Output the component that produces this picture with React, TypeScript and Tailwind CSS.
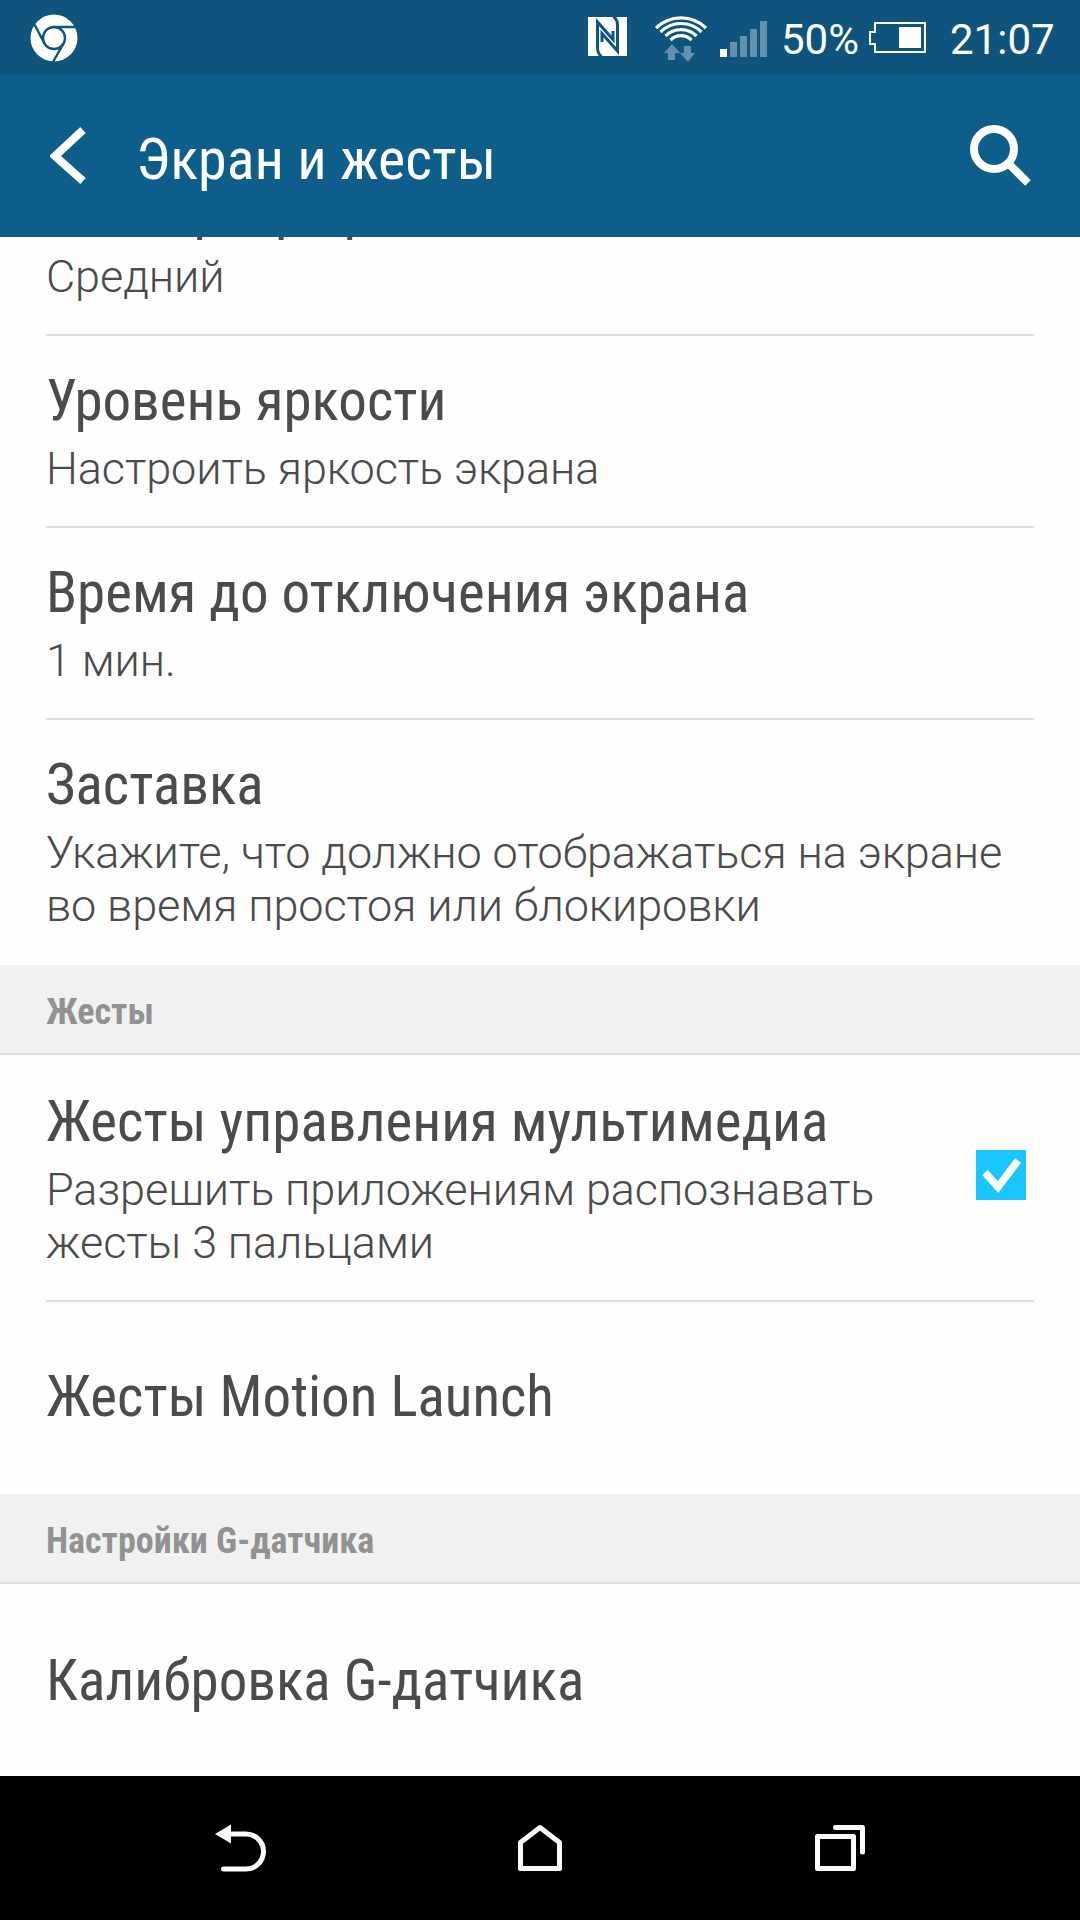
import type { ReactNode } from "react";

const titleClass =
  "block h-[68px] w-fit whitespace-nowrap leading-[68px] [font-stretch:75%]";

interface RowProps {
  title: string;
  summary?: string[];
  divider?: boolean;
  className?: string;
  children?: ReactNode;
}

function Row({ title, summary, divider, className = "", children }: RowProps) {
  return (
    <div className={`shrink-0 px-[46px] ${className}`}>
      <div
        className={`flex h-full items-start justify-between ${
          summary ? "pt-[31px]" : "pt-[63px]"
        } ${divider ? "border-b-2 border-[#dddddd]" : ""}`}
      >
        <div>
          <span className={`${titleClass} text-[57px]`}>{title}</span>
          {summary && (
            <p className="mt-[7px] text-[45px] leading-[53px] font-light tracking-[-0.1px] whitespace-nowrap">
              {summary.map((line) => (
                <span key={line} className="block">
                  {line}
                </span>
              ))}
            </p>
          )}
        </div>
        {children}
      </div>
    </div>
  );
}

function SectionHeader({ label }: { label: string }) {
  return (
    <div className="flex h-[90px] shrink-0 items-center border-b-2 border-[#dcdedd] bg-[#f0f2f1] px-[46px] pt-[6px]">
      <span className="text-[36px] leading-[42px] font-bold text-[#929292] [font-stretch:75%]">
        {label}
      </span>
    </div>
  );
}

function StatusBar() {
  return (
    <div className="flex h-[75px] items-center bg-[#0e547c] text-[42px] text-white">
      <svg width="48" height="48" viewBox="0 0 48 48" className="ml-[30px]">
        <circle cx="24" cy="24" r="23.5" fill="#fff" />
        <g fill="none" stroke="#0e547c" strokeWidth="2.4">
          <circle cx="24" cy="24" r="11" />
          <path d="M24 13H46M14.5 29.5L4.5 10.5M33.5 29.5L23 48" />
        </g>
      </svg>
      <svg width="39" height="39" viewBox="0 0 39 39" className="mb-[2px] ml-[510px]">
        <path d="M0 0H39V39H0Z" fill="#fff" />
        <path
          d="M13.5 39.5Q9.5 36.500 9.500 31V5L25 22.500V14M25.500 -0.500Q29.500 2.500 29.500 8V34L14 16.500V25"
          fill="none"
          stroke="#0e547c"
          strokeWidth="3"
        />
      </svg>
      <svg width="54" height="52" viewBox="0 0 54 52" className="ml-[27px]">
        <g fill="none" stroke="#fff" strokeWidth="3.200">
          <path d="M2 16A36 36 0 0 1 52 16" />
          <path d="M6.500 20A29 29 0 0 1 47.500 20" />
          <path d="M11.500 24A22 22 0 0 1 42.500 24" />
          <path d="M16.500 28A15 15 0 0 1 37.500 28" />
        </g>
        <path
          d="M18 32L26 41H21V48H14V41H10ZM30 34H37V41H41L34 50L26 41H30Z"
          fill="#6291ad"
        />
      </svg>
      <svg width="47" height="36" viewBox="0 0 47 36" className="mt-[3px] ml-[12px]">
        <path d="M0 28H7V36H0Z" fill="#fff" />
        <path
          d="M10 21H17V36H10ZM20 15H27V36H20ZM30 8H37V36H30ZM40 0H47V36H40Z"
          fill="#6291ad"
        />
      </svg>
      <span className="mt-[3px] ml-[14px] w-[79px]">50%</span>
      <svg width="57" height="31" viewBox="0 0 57 31" className="ml-[9px]">
        <path d="M6 1H56V30H6V22H1V10H6Z" fill="none" stroke="#fff" strokeWidth="2" />
        <path d="M30 5H52V26H30Z" fill="#fff" />
      </svg>
      <span className="mt-[3px] ml-[24px]">21:07</span>
    </div>
  );
}

function ActionBar() {
  return (
    <div className="flex h-[162px] items-center bg-[#0d5e8b] text-white">
      <svg width="38" height="58" viewBox="0 0 38 58" className="ml-[50px]">
        <path d="M33 3L5 29L33 54" fill="none" stroke="#fff" strokeWidth="8" />
      </svg>
      <span className="ml-[48px] grow pt-[6px]">
        <span className={`${titleClass} text-[58px]`}>Экран и жесты</span>
      </span>
      <svg width="64" height="64" viewBox="0 0 64 64" className="mt-[2px] mr-[46px]">
        <circle cx="24" cy="24" r="20" fill="none" stroke="#fff" strokeWidth="8" />
        <path d="M38 38L58 58" stroke="#fff" strokeWidth="8" />
      </svg>
    </div>
  );
}

function Checkbox() {
  return (
    <svg width="50" height="50" viewBox="0 0 50 50" className="mt-[62px] mr-2">
      <path d="M0 0H50V50H0Z" fill="#1bc5ff" />
      <path d="M9 22.500L22 37L42 10.500" fill="none" stroke="#fff" strokeWidth="7.500" />
    </svg>
  );
}

function NavBar() {
  return (
    <div className="flex h-[144px] shrink-0 items-center bg-black">
      <svg width="51" height="48" viewBox="0 0 51 48" className="ml-[215px]">
        <path d="M0 10L16 0.500V19.500Z" fill="#fff" />
        <path
          d="M14 10H31A17.500 17.500 0 0 1 31 45H8.500"
          fill="none"
          stroke="#fff"
          strokeWidth="5"
          strokeLinecap="round"
        />
      </svg>
      <svg width="44" height="48" viewBox="0 0 44 48" className="ml-[252px]">
        <path
          d="M2.500 18.500L22 3.500L41.500 18.500V44.500H2.500Z"
          fill="none"
          stroke="#fff"
          strokeWidth="5"
          strokeLinejoin="round"
        />
      </svg>
      <svg width="51" height="48" viewBox="0 0 51 48" className="ml-[253px]">
        <g
          fill="none"
          stroke="#fff"
          strokeWidth="5"
          strokeLinejoin="round"
          strokeLinecap="round"
        >
          <path d="M2.500 12.500H38.500V44.500H2.500Z" />
          <path d="M20.500 3.500H47.500V28" />
        </g>
      </svg>
    </div>
  );
}

export default function App() {
  return (
    <div className="flex h-[1920px] w-[1080px] flex-col overflow-hidden bg-[#fefefe] font-['Roboto',sans-serif] text-[#4b4b4b]">
      <StatusBar />
      <ActionBar />
      <div className="flex grow flex-col overflow-hidden">
        {/* first row is scrolled half under the action bar */}
        <Row
          title="Размер шрифта"
          summary={["Средний"]}
          divider
          className="-mt-[93px] h-[192px]"
        />
        <Row
          title="Уровень яркости"
          summary={["Настроить яркость экрана"]}
          divider
          className="h-[192px]"
        />
        <Row
          title="Время до отключения экрана"
          summary={["1 мин."]}
          divider
          className="h-[192px]"
        />
        <Row
          title="Заставка"
          summary={[
            "Укажите, что должно отображаться на экране",
            "во время простоя или блокировки",
          ]}
          className="h-[245px]"
        />
        <SectionHeader label="Жесты" />
        <Row
          title="Жесты управления мультимедиа"
          summary={["Разрешить приложениям распознавать", "жесты 3 пальцами"]}
          divider
          className="h-[247px] pt-[2px]"
        >
          <Checkbox />
        </Row>
        <Row title="Жесты Motion Launch" className="-mt-[2px] h-[194px]" />
        <SectionHeader label="Настройки G-датчика" />
        <Row title="Калибровка G-датчика" className="h-[192px]" />
      </div>
      <NavBar />
    </div>
  );
}
